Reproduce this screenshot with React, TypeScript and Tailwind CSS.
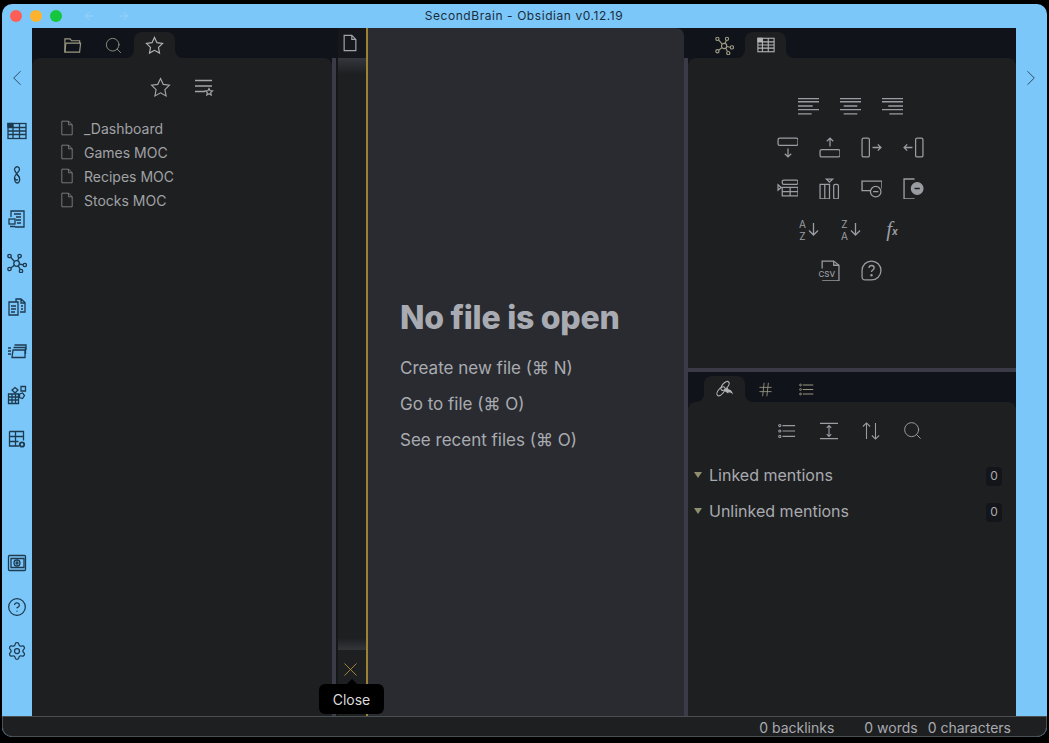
import React from 'react';
import { Search, ChevronLeft, ChevronRight, ArrowLeft, ArrowRight, CircleHelp, Settings, X, Hash } from 'lucide-react';

type IconProps = { className?: string; size?: number; strokeWidth?: number };

const Svg: React.FC<IconProps & { children: React.ReactNode }> = ({ className, size = 20, strokeWidth = 1.2, children }) => (
  <svg width={size} height={size} viewBox="0 0 20 20" fill="none" stroke="currentColor" strokeWidth={strokeWidth} className={className}>
    {children}
  </svg>
);

const StarIcon: React.FC<IconProps> = (p) => (
  <Svg {...p}>
    <polygon points="10,1.500 12.600,7 18.500,7.800 14.200,12 15.300,18 10,15.100 4.700,18 5.800,12 1.500,7.800 7.400,7" />
  </Svg>
);

const FolderIcon: React.FC<IconProps> = (p) => (
  <Svg {...p}>
    <path d="M2 17V3h5.500l1.500 2h8.500v3" />
    <path d="M2 17l1-9.500h15.500L17.500 17z" />
  </Svg>
);

const FileIcon: React.FC<IconProps> = (p) => (
  <Svg {...p}>
    <path d="M3.500 1.500h8.500l4.500 4.500v12.500h-13zM12 1.500V6h4.500" />
  </Svg>
);

const GraphIcon: React.FC<IconProps> = (p) => (
  <Svg {...p}>
    <circle cx="9.600" cy="10.500" r="2.800" />
    <circle cx="2.500" cy="3" r="1.700" />
    <circle cx="12.600" cy="3" r="1.700" />
    <circle cx="17.800" cy="12" r="1.700" />
    <circle cx="14" cy="18" r="1.700" />
    <circle cx="2.500" cy="16" r="1.700" />
    <path d="M3.700 4.200l3.900 4.400M12 4.700l-1.500 3M16.100 11.800l-3.700-.8M13.200 16.400l-2-3.500M3.800 15l3.600-2.800" />
  </Svg>
);

const TableIcon: React.FC<IconProps> = (p) => (
  <Svg {...p}>
    <rect x="1" y="2.500" width="18" height="15" />
    <rect x="1" y="2.500" width="4.500" height="3.500" fill="currentColor" />
    <path d="M1 6.500h18M1 10h18M1 13.500h18M6 2.500v15M12.500 2.500v15" />
  </Svg>
);

const ClipIcon: React.FC<IconProps> = (p) => (
  <Svg {...p}>
    <path d="M8 3c1.300-2 4.500-1.500 4.500 1.500 0 2.500-5 5-5 8 0 3 1 5.500 2.800 5.500s2.700-2.500 2.200-5c-.5-2.500-5-6-5-8.500 0-1 .2-1 .5-1.500z" />
    <path d="M7.500 12.500c.5 2.500 2 3 3.500 2M12.500 12.500c-.5-1.500-2-2.500-3-3" />
  </Svg>
);

const NoteIcon: React.FC<IconProps> = (p) => (
  <Svg {...p}>
    <path d="M4 8V2h13v16H8" />
    <path d="M7 5h7M9 8h5M9 11h5M10 14h4" />
    <rect x="2" y="10" width="6" height="5" />
    <path d="M3 17.500h5" />
  </Svg>
);

const DocsIcon: React.FC<IconProps> = (p) => (
  <Svg {...p}>
    <path d="M2 5h9v13H2zM4 9h5M4 12h5M4 15h4" />
    <path d="M9 5V2h5l4 3.500V15h-5M14 2v4h4M14 9h2M14 12h2" />
  </Svg>
);

const CardsIcon: React.FC<IconProps> = (p) => (
  <Svg {...p}>
    <path d="M6 9h12v7.500H5z" />
    <path d="M6.500 6.500H18.500V13M7.500 4H19V9" />
    <path d="M1 7h3M1 10h3M1 13h3" />
  </Svg>
);

const GridShapesIcon: React.FC<IconProps> = (p) => (
  <Svg {...p}>
    <path d="M1.500 9h10v9.500h-10zM1.500 12h10M1.500 15h10M5 9v9.500M8.500 9v9.500" />
    <path d="M8 2.500l3 2.500-3 3-3-3zM14 1.500h4.500V6H14zM12.500 9l3-1 2 2.500-2 3-3-1z" />
  </Svg>
);

const GridGearIcon: React.FC<IconProps> = (p) => (
  <Svg {...p}>
    <path d="M2.500 2.500h14v9M12 17H2.500V2.500M2.500 7.500h14M2.500 12.500h9M8.500 2.500V17" />
    <circle cx="15" cy="15.500" r="2.200" strokeWidth={1.800} />
  </Svg>
);

const SafeIcon: React.FC<IconProps> = (p) => (
  <Svg {...p}>
    <rect x="1.500" y="2.500" width="17" height="15" rx="1" />
    <path d="M4 5.500h13v9H4z" />
    <circle cx="10" cy="10" r="3" />
    <circle cx="10" cy="10" r="1" />
  </Svg>
);

const FilteredListIcon: React.FC<IconProps> = (p) => (
  <Svg {...p}>
    <path d="M1 3.500h17M1 9h17M1 14.500h10" strokeWidth={1.300} />
    <path d="M15 11.500l1.100 2.200 2.400.3-1.800 1.600.5 2.400-2.200-1.200-2.200 1.200.5-2.400-1.800-1.600 2.400-.3z" />
  </Svg>
);

const alignPaths = {
  left: 'M0 2.500h20M0 5.500h20M0 9.500h14M0 13h20M0 17h13',
  center: 'M0 2.500h20M0 5.500h20M3.500 9.500h13M0 13h20M3.500 17h13',
  right: 'M0 2.500h20M0 5.500h20M6 9.500h14M0 13h20M7 17h13',
};

const AlignIcon: React.FC<IconProps & { mode: 'left' | 'center' | 'right' }> = ({ mode, ...p }) => (
  <Svg {...p} strokeWidth={1.300}>
    <path d={alignPaths[mode]} />
  </Svg>
);

const RowBelowIcon: React.FC<IconProps> = (p) => (
  <Svg {...p}>
    <rect x="1" y="1" width="19" height="7" rx="1.500" />
    <path d="M10.500 11v8M7.500 16l3 3 3-3" />
  </Svg>
);
const RowAboveIcon: React.FC<IconProps> = (p) => (
  <Svg {...p}>
    <rect x="1" y="12" width="19" height="7" rx="1.500" />
    <path d="M10.500 9V1M7.500 4l3-3 3 3" />
  </Svg>
);
const ColRightIcon: React.FC<IconProps> = (p) => (
  <Svg {...p}>
    <rect x="1" y="1" width="7" height="18" rx="1.500" />
    <path d="M11 10h8M16 7l3 3-3 3" />
  </Svg>
);
const ColLeftIcon: React.FC<IconProps> = (p) => (
  <Svg {...p}>
    <rect x="12" y="1" width="7" height="18" rx="1.500" />
    <path d="M9 10H1M4 7l-3 3 3 3" />
  </Svg>
);
const MoveRowIcon: React.FC<IconProps> = (p) => (
  <Svg {...p}>
    <rect x="5" y="2" width="15" height="4" rx="1.500" />
    <path d="M5 9h15v8H5zM5 13h15M12.500 9v8" />
    <path d="M1 6.500l3 2.500-3 2.500z" />
  </Svg>
);
const MoveColIcon: React.FC<IconProps> = (p) => (
  <Svg {...p}>
    <path d="M1 6h9v14H1zM5.500 6v14" />
    <rect x="14" y="6" width="4.500" height="14" rx="1.500" />
    <path d="M7 1h6l-3 3z" />
  </Svg>
);
const DeleteRowIcon: React.FC<IconProps> = (p) => (
  <Svg {...p}>
    <path d="M10 12H1V3h19v7" strokeWidth={1.300} />
    <circle cx="14" cy="13" r="5" fill="#1e1f21" />
    <path d="M11.500 13h5" />
  </Svg>
);
const DeleteColIcon: React.FC<IconProps> = (p) => (
  <Svg {...p}>
    <path d="M11 1H1v19h10" strokeWidth={1.300} />
    <circle cx="13.500" cy="10" r="5.500" fill="currentColor" />
    <path d="M11 10h5" stroke="#1e1f21" strokeWidth={1.600} />
  </Svg>
);
const CsvIcon: React.FC<IconProps> = (p) => (
  <Svg {...p}>
    <path d="M3 8V1h11l5 4v15H3" />
    <path d="M14 1v4h5" />
  </Svg>
);
const QuestionBubbleIcon: React.FC<IconProps> = (p) => (
  <Svg {...p}>
    <path d="M10 1a9 9 0 0 1 0 18H4c-2 0-3-1-3-3v-6a9 9 0 0 1 9-9z" strokeWidth={1.200} />
    <path d="M7.500 7.500c.3-3 5-3 5 0 0 2-2.500 2-2.500 4" strokeWidth={1.300} />
    <circle cx="10" cy="14.500" r=".6" fill="currentColor" />
  </Svg>
);
const BacklinkIcon: React.FC<IconProps> = (p) => (
  <Svg {...p}>
    <ellipse cx="5.500" cy="12.500" rx="3" ry="6" transform="rotate(40 5.500 12.500)" />
    <ellipse cx="10" cy="6.500" rx="3" ry="6" transform="rotate(40 10 6.500)" />
    <path d="M9 12l4-3.500 .8 1.800c2.500.4 4.500 2.500 5.200 5.700-1.500-1.700-3.200-2.500-5-2.500l-.500 1.500z" fill="currentColor" stroke="none" />
  </Svg>
);
const DotsListIcon: React.FC<IconProps> = (p) => (
  <Svg {...p}>
    <path d="M5 4h14M5 10h14M5 16h14" strokeWidth={1.300} />
    <circle cx="2" cy="4" r="1.200" />
    <circle cx="2" cy="10" r="1.200" />
    <circle cx="2" cy="16" r="1.200" />
  </Svg>
);
const ExpandIcon: React.FC<IconProps> = (p) => (
  <Svg {...p}>
    <path d="M0 1.500h20M0 18.500h20" strokeWidth={1.600} />
    <path d="M10 4v12M7.500 6.500L10 4l2.500 2.500M7.500 13.500L10 16l2.500-2.500" />
  </Svg>
);
const SortIcon: React.FC<IconProps> = (p) => (
  <Svg {...p}>
    <path d="M5 19V1M1 5l4-4 4 4M15 1v18M11 15l4 4 4-4" />
  </Svg>
);

const SortLetters: React.FC<{ top: string; bottom: string }> = ({ top, bottom }) => (
  <div className="flex w-[21px] h-[21px] items-center">
    <div className="flex flex-col text-[10px] leading-[12px] w-[10px] items-center text-[#9a9da2]">
      <span>{top}</span>
      <span>{bottom}</span>
    </div>
    <svg width="11" height="15" viewBox="0 0 11 15" fill="none" stroke="#9a9da2" strokeWidth={1.300}>
      <path d="M5.500 1v12M1 8.500L5.500 13 10 8.500" />
    </svg>
  </div>
);

const ActiveTab: React.FC<{ children: React.ReactNode }> = ({ children }) => (
  <div className="relative w-[41px] h-[26px] rounded-t-lg bg-[#1e1f21] flex items-center justify-center text-[#b4b5b8]">
    <span className="absolute -left-2 bottom-0 w-2 h-2 bg-[#1e1f21]">
      <span className="block w-2 h-2 rounded-br-lg bg-[#10131a]" />
    </span>
    <span className="absolute -right-2 bottom-0 w-2 h-2 bg-[#1e1f21]">
      <span className="block w-2 h-2 rounded-bl-lg bg-[#10131a]" />
    </span>
    {children}
  </div>
);

const Tab: React.FC<{ children: React.ReactNode }> = ({ children }) => (
  <div className="w-[41px] h-[26px] flex items-center justify-center">{children}</div>
);

const ribbonTop = [TableIcon, ClipIcon, NoteIcon, GraphIcon, DocsIcon, CardsIcon, GridShapesIcon, GridGearIcon];
const files = ['_Dashboard', 'Games MOC', 'Recipes MOC', 'Stocks MOC'];

const App: React.FC = () => {
  return (
    <div className="w-[1049px] h-[743px] bg-black pt-1 pb-1.5 px-0.5 overflow-hidden font-['Inter',sans-serif]">
      <div className="w-full h-full rounded-[10px] overflow-hidden flex flex-col relative bg-[#7cc7f9]">
        {/* title bar */}
        <div className="h-6 shrink-0 flex items-center relative">
          <div className="flex gap-2 pl-2 items-center">
            <span className="w-3 h-3 rounded-full bg-[#fd5f57]" />
            <span className="w-3 h-3 rounded-full bg-[#fdb32e]" />
            <span className="w-3 h-3 rounded-full bg-[#14c73c]" />
          </div>
          <ArrowLeft size={12} className="text-[#9ad2f8] ml-[21px]" />
          <ArrowRight size={12} className="text-[#9ad2f8] ml-[23px]" />
          <div className="absolute inset-0 flex items-center justify-center text-[12px] tracking-[0.56px] text-[#1b2c3a] pr-px">
            SecondBrain - Obsidian v0.12.19
          </div>
        </div>

        <div className="flex-1 min-h-0 flex">
          {/* left ribbon */}
          <div className="w-[30px] shrink-0 flex flex-col items-center text-[#1c3a50]">
            <ChevronLeft size={26} strokeWidth={0.8} className="mt-[37px] mb-[30px] text-[#1f3a50]" />
            <div className="flex flex-col gap-6">
              {ribbonTop.map((Icon, i) => (
                <Icon key={i} size={20} strokeWidth={1.300} />
              ))}
            </div>
            <div className="mt-auto flex flex-col gap-6 mb-[55px]">
              <SafeIcon size={20} strokeWidth={1.300} />
              <CircleHelp size={20} strokeWidth={1.500} />
              <Settings size={20} strokeWidth={1.500} />
            </div>
          </div>

          {/* left sidebar */}
          <div className="w-[300px] shrink-0 flex flex-col bg-[#10131a]">
            <div className="h-[30px] shrink-0 flex items-end pl-[20px] text-[#9b9a82]">
              <Tab><FolderIcon size={19} /></Tab>
              <Tab><Search size={19} strokeWidth={1.100} /></Tab>
              <ActiveTab><StarIcon size={19} /></ActiveTab>
            </div>
            <div className="flex-1 bg-[#1e1f21] rounded-t-lg pl-[27px]">
              <div className="flex justify-center gap-[23px] pt-[19px] pr-[27px] text-[#a4a5a8]">
                <StarIcon size={21} strokeWidth={1.100} />
                <FilteredListIcon size={20} />
              </div>
              <div className="mt-[18px] flex flex-col">
                {files.map((name) => (
                  <div key={name} className="h-6 flex items-center gap-[9px] text-[14px] text-[#a0a2a6]">
                    <FileIcon size={16} strokeWidth={1} className="text-[#8c8e92]" />
                    <span>{name}</span>
                  </div>
                ))}
              </div>
            </div>
          </div>

          {/* resize handle */}
          <div className="w-[6px] shrink-0 flex flex-col bg-[#15161a]">
            <div className="h-[30px] shrink-0 bg-[#10131a]" />
            <div className="flex-1 w-1 bg-[#3a3b46]" />
          </div>

          {/* collapsed pane strip */}
          <div className="w-[30px] shrink-0 flex flex-col bg-[#1e1f21] border-r-2 border-[#9c8233]">
            <div className="h-[30px] shrink-0 bg-[#15171d] flex items-center justify-center pr-1 text-[#a4a5a8]">
              <FileIcon size={18} strokeWidth={1.300} />
            </div>
            <div className="h-4 shrink-0 bg-gradient-to-b from-[#36373e] to-[#1e1f21]" />
            <div className="flex-1" />
            <div className="h-3 shrink-0 bg-gradient-to-b from-[#1e1f21] to-[#35363a]" />
            <div className="h-[66px] shrink-0 flex justify-center pt-[8px] pr-1 text-[#b3963b]">
              <X size={23} strokeWidth={0.900} />
            </div>
          </div>

          {/* main pane */}
          <div className="w-[316px] shrink-0 bg-[#10131a]">
            <div className="h-full bg-[#2a2b30] rounded-tr-lg flex flex-col justify-center pl-8 pt-2">
              <h1 className="text-[32px] leading-9 font-extrabold tracking-[-0.25px] text-[#a9abb2]">No file is open</h1>
              <div className="mt-5 flex flex-col gap-3 text-[17px] leading-6 text-[#a9abb0]">
                <div>Create new file (⌘ N)</div>
                <div>Go to file (⌘ O)</div>
                <div>See recent files (⌘ O)</div>
              </div>
            </div>
          </div>

          <div className="w-1 shrink-0 flex flex-col bg-[#3a3b46]">
            <div className="h-[30px] shrink-0 bg-[#10131a]" />
          </div>

          {/* right sidebar */}
          <div className="w-[328px] shrink-0 flex flex-col">
            <div className="h-[340px] shrink-0 flex flex-col bg-[#10131a]">
              <div className="h-[30px] shrink-0 flex items-end pl-[16px] text-[#9b9a82]">
                <Tab><GraphIcon size={19} /></Tab>
                <ActiveTab><TableIcon size={18} /></ActiveTab>
              </div>
              <div className="flex-1 bg-[#1e1f21] rounded-t-lg flex flex-col items-center gap-[20px] pt-[38px] pr-1 text-[#9a9da2]">
                <div className="flex gap-[21px]">
                  <AlignIcon mode="left" size={21} />
                  <AlignIcon mode="center" size={21} />
                  <AlignIcon mode="right" size={21} />
                </div>
                <div className="flex gap-[21px]">
                  <RowBelowIcon size={21} />
                  <RowAboveIcon size={21} />
                  <ColRightIcon size={21} />
                  <ColLeftIcon size={21} />
                </div>
                <div className="flex gap-[21px]">
                  <MoveRowIcon size={21} />
                  <MoveColIcon size={21} />
                  <DeleteRowIcon size={21} />
                  <DeleteColIcon size={21} />
                </div>
                <div className="flex gap-[21px]">
                  <SortLetters top="A" bottom="Z" />
                  <SortLetters top="Z" bottom="A" />
                  <div className="w-[21px] h-[21px] flex items-center justify-center text-[#9a9da2]">
                    <span className="font-['Liberation_Serif',serif] italic text-[21px] leading-none">f</span>
                    <span className="text-[10px] font-bold italic mt-1">x</span>
                  </div>
                </div>
                <div className="flex gap-[21px]">
                  <div className="relative w-[21px] h-[21px]">
                    <CsvIcon size={21} />
                    <span className="absolute left-0 bottom-[2px] bg-[#1e1f21] text-[8px] leading-[9px] font-medium">CSV</span>
                  </div>
                  <QuestionBubbleIcon size={21} />
                </div>
              </div>
            </div>

            <div className="h-1 shrink-0 bg-[#3a3b46]" />

            <div className="flex-1 flex flex-col bg-[#10131a]">
              <div className="h-[30px] shrink-0 flex items-end pl-[16px] text-[#9b9a82]">
                <ActiveTab><BacklinkIcon size={18} /></ActiveTab>
                <Tab><Hash size={17} strokeWidth={1.200} /></Tab>
                <Tab><DotsListIcon size={15} /></Tab>
              </div>
              <div className="flex-1 bg-[#1e1f21] rounded-t-lg">
                <div className="flex justify-center items-center gap-6 pt-[18px] pr-[5px] text-[#9a9da2]">
                  <DotsListIcon size={18} />
                  <ExpandIcon size={18} />
                  <SortIcon size={18} />
                  <Search size={21} strokeWidth={1.100} className="-ml-0.5 -mr-0.5" />
                </div>
                <div className="mt-[22px] flex flex-col gap-3">
                  {['Linked mentions', 'Unlinked mentions'].map((label) => (
                    <div key={label} className="h-6 flex items-center pl-[6px] pr-[14px] text-[16px] text-[#a9abb0]">
                      <span className="w-0 h-0 border-x-[4px] border-x-transparent border-t-[6px] border-t-[#8f8e6f] mr-[7px]" />
                      <span>{label}</span>
                      <span className="ml-auto mt-0.5 w-4 h-[19px] rounded bg-[#14151a] flex items-center justify-center text-[12px]">0</span>
                    </div>
                  ))}
                </div>
              </div>
            </div>
          </div>

          {/* right ribbon */}
          <div className="w-[31px] shrink-0 flex justify-center pr-0.5">
            <ChevronRight size={26} strokeWidth={0.8} className="mt-[37px] text-[#1f3a50]" />
          </div>
        </div>

        {/* status bar */}
        <div className="h-[21px] shrink-0 bg-[#1e1f21] border border-[#4a4f52] rounded-b-[10px] flex items-center justify-end pr-[35px] pt-px text-[14px] text-[#a9abb0]">
          <span className="mr-[30px]">0 backlinks</span>
          <span className="mr-[10px]">0 words</span>
          <span>0 characters</span>
        </div>

        {/* tooltip */}
        <div className="absolute left-[317px] top-[680px] bg-black rounded-md w-[65px] h-[30px] flex items-center justify-center text-[14px] text-[#dcdcdc]">
          <span className="absolute -top-[5px] left-[28px] w-0 h-0 border-x-[5px] border-x-transparent border-b-[5px] border-b-black" />
          Close
        </div>
      </div>
    </div>
  );
};

export default App;
